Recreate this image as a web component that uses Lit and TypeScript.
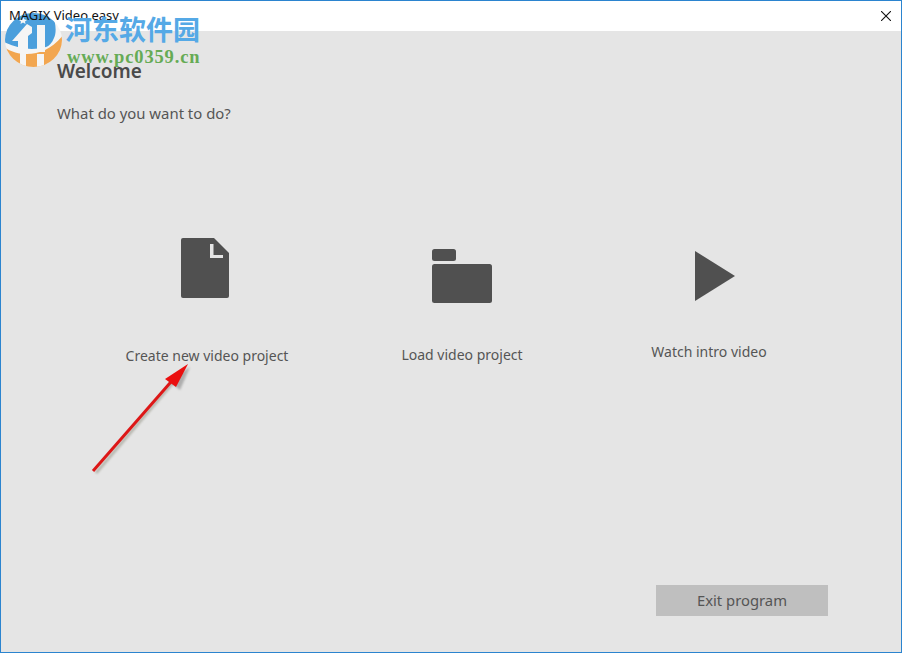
import { LitElement, html, css, svg } from "lit";
import { customElement } from "lit/decorators.js";

@customElement("app-root")
export class AppRoot extends LitElement {
  static styles = css`
    :host { display: block; }
    .win {
      position: relative; width: 902px; height: 653px; box-sizing: border-box;
      border: 1px solid #2b84cf; background: #e5e5e5;
      display: flex; flex-direction: column; overflow: hidden;
      font-family: "Noto Sans", "Open Sans", sans-serif; color: #505050;
    }
    .title {
      height: 30px; flex: none; background: #fff; display: flex; align-items: center;
      justify-content: space-between; padding: 0 10px 0 8px;
      font: 13px/15px "Noto Sans", sans-serif; color: #111;
    }
    .close { display: block; width: 10px; height: 10px; }
    .main { flex: 1; display: flex; flex-direction: column; padding: 28px 73px 36px 56px; min-height: 0; }
    h1 { margin: 0; font-size: 19px; line-height: 24px; font-weight: 600; color: #4a4a4a; }
    .q { margin: 20px 0 0; font-size: 14.9px; line-height: 20px; color: #555; }
    .opts { display: flex; flex: 1; align-items: flex-start; padding-top: 115px; }
    .opt { display: flex; flex-direction: column; align-items: center; font-size: 14px; line-height: 20px; white-space: nowrap; color: #555; }
    .opt svg { display: block; }
    .o1 { width: 162px; margin-left: 69px; }
    .o1 svg { margin-bottom: 48px; margin-left: -4px; }
    .o2 { width: 122px; margin-left: 113px; padding-top: 11px; }
    .o2 svg { margin-bottom: 42px; }
    .o3 { width: 116px; margin-left: 128px; padding-top: 13px; }
    .o3 svg { margin-bottom: 41px; margin-left: 11px; }
    .foot { display: flex; justify-content: flex-end; }
    .exit {
      width: 172px; height: 31px; border: 0; background: #bfbfbf; color: #555;
      font: 14.8px/20px "Noto Sans", sans-serif; padding: 0 0 2px;
    }
    .mark { position: absolute; left: -1px; top: -1px; pointer-events: none; }
    .wm { position: absolute; pointer-events: none; white-space: nowrap; }
    .wm-cn {
      left: 64px; top: 10px; font: 700 27px/36px "Noto Sans CJK SC", sans-serif;
      color: #55a9e6;
    }
    .wm-url {
      left: 66px; top: 45px; font: 700 18.5px/22px "Liberation Serif", serif;
      color: #66ab55; letter-spacing: 0.85px;
    }
    .cap {
      position: absolute; left: 8px; top: 7px; font: 13px/15px "Noto Sans", sans-serif;
      color: #111; white-space: nowrap;
    }
  `;

  render() {
    return html`<div class="win">
      <div class="title">
        <span></span>
        <svg class="close" viewBox="0 0 10 10"><path d="M0 0l10 10M10 0L0 10" stroke="#111" stroke-width="1.1" fill="none"/></svg>
      </div>
      <div class="main">
        <h1>Welcome</h1>
        <p class="q">What do you want to do?</p>
        <div class="opts">
          <div class="opt o1">
            <svg width="48" height="60" viewBox="0 0 48 60">
              <path fill="#505050" d="M2 0H33L48 15V58a2 2 0 0 1-2 2H2a2 2 0 0 1-2-2V2a2 2 0 0 1 2-2Z"/>
              <path fill="#e5e5e5" d="M29 6h3.500v11H42v3H29Z"/>
            </svg>
            <span>Create new video project</span>
          </div>
          <div class="opt o2">
            <svg width="60" height="54" viewBox="0 0 60 54">
              <rect x="0" y="0" width="24" height="12" rx="2.500" fill="#505050"/>
              <rect x="0" y="15" width="60" height="39" rx="2.500" fill="#505050"/>
            </svg>
            <span>Load video project</span>
          </div>
          <div class="opt o3">
            <svg width="40" height="50" viewBox="0 0 40 50">
              <path fill="#505050" d="M0 0L40 25L0 50Z"/>
            </svg>
            <span>Watch intro video</span>
          </div>
        </div>
        <div class="foot"><button class="exit">Exit program</button></div>
      </div>
      ${this.overlay()}
      <div class="cap">MAGIX Video easy</div>
      <div class="wm wm-cn">河东软件园</div>
      <div class="wm wm-url">www.pc0359.cn</div>
    </div>`;
  }

  overlay() {
    return svg`<svg class="mark" width="902" height="653" viewBox="0 0 902 653">
      <defs>
        <clipPath id="c"><ellipse cx="33.500" cy="40" rx="28.500" ry="27"/></clipPath>
        <filter id="b" x="-20%" y="-20%" width="140%" height="140%"><feGaussianBlur stdDeviation="1.200"/></filter>
      </defs>
      <g clip-path="url(#c)">
        <rect x="0" y="10" width="66" height="60" fill="#f5f5f5"/>
        <path fill="#4b9fdc" d="M0 10H50C56 20 57 32 54 38C52 43 49 46 46 47C32 51 16 49 0 40Z"/>
        <path fill="#f2a650" d="M4 47C20 58 46 58 64 34V72H0Z"/>
        <path fill="#f5f5f5" d="M20 52h6v16h-6ZM37 54h7v14h-7Z"/>
        <path fill="#f5f5f5" d="M12 41L27 24L32 27V33L28 36V49H18V41Z"/>
        <path fill="#f5f5f5" d="M37 25h8v27h-8Z"/>
        <path fill="#f5f5f5" d="M23 17l1.500 2.500 2.500.5-2 1.500.5 2.500-2.500-1.500-2.500 1.500.5-2.500-2-1.500 2.500-.5Z"/>
      </g>
      <g>
        <path d="M96 473L182 372" stroke="#8f8f80" stroke-width="3" fill="none" opacity=".55" filter="url(#b)"/>
        <path d="M190 367L169 381L180 390Z" fill="#777" opacity=".5" filter="url(#b)"/>
        <path d="M93 471L177 375" stroke="#dd1717" stroke-width="3" fill="none"/>
        <path d="M188 364L165 379L176 387Z" fill="#ea0f0f"/>
      </g>
    </svg>`;
  }
}
